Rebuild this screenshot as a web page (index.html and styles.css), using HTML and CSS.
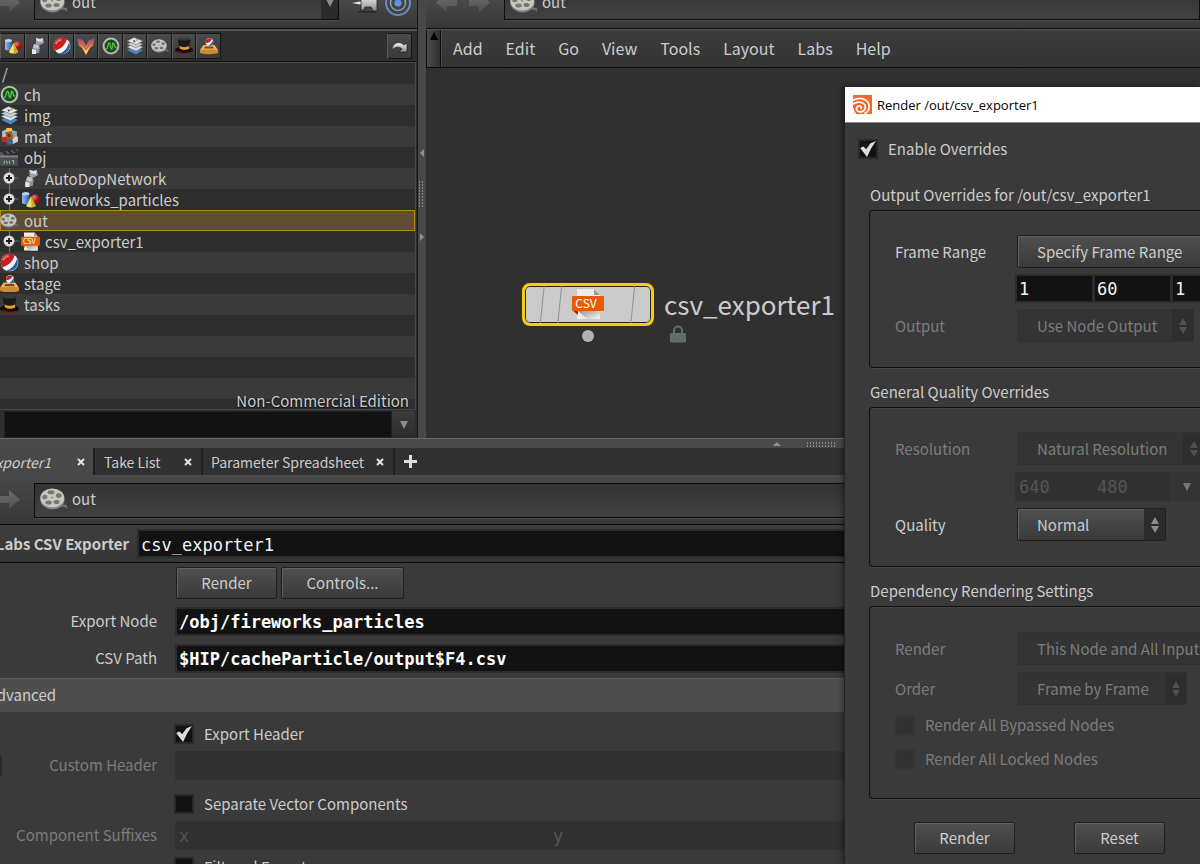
FILE: index.html
```html
<!DOCTYPE html>
<html lang="en">
<head>
<meta charset="utf-8">
<title>csv_exporter1</title>
<meta name="viewport" content="width=device-width, initial-scale=1">
<link rel="stylesheet" href="styles.css">
</head>
<body>
<svg class="sprite" aria-hidden="true">
  <defs>
    <linearGradient id="g-blue" x1="0" x2="1"><stop offset="0" stop-color="#9cc0ea"/><stop offset="1" stop-color="#2c5b9c"/></linearGradient>
    <radialGradient id="g-red" cx=".35" cy=".3"><stop offset="0" stop-color="#f08070"/><stop offset="1" stop-color="#a01010"/></radialGradient>
    <linearGradient id="g-flame" x1="0" x2="0" y1="0" y2="1"><stop offset="0" stop-color="#7a4a98"/><stop offset=".5" stop-color="#e08040"/><stop offset="1" stop-color="#f8b030"/></linearGradient>
    <linearGradient id="g-metal" x1="0" x2="0" y1="0" y2="1"><stop offset="0" stop-color="#f4f4f4"/><stop offset="1" stop-color="#8a8a8a"/></linearGradient>
    <linearGradient id="g-fold" x1="0" x2="1" y1="0" y2="1"><stop offset="0" stop-color="#8c8c8c"/><stop offset="1" stop-color="#f6f6f6"/></linearGradient>
    <linearGradient id="g-arrow" x1="0" x2="0" y1="0" y2="1"><stop offset="0" stop-color="#6e6e6e"/><stop offset="1" stop-color="#505050"/></linearGradient>
  </defs>
  <symbol id="i-shapes" viewBox="0 0 18 18">
    <path d="M1 4v8c1 2 6 2 7 0V4z" fill="url(#g-blue)"/><ellipse cx="4.500" cy="3.500" rx="3.500" ry="1.500" fill="#b8d0ee"/>
    <circle cx="13.500" cy="8.500" r="4.300" fill="url(#g-red)"/>
    <path d="M9.500 6l4.500 9c-1.500 2-8 2-9 0z" fill="#f2e070"/><path d="M9.500 6l4.500 9c-1 1-2.500 1.500-4 1.500z" fill="#c9a828"/>
  </symbol>
  <symbol id="i-dop" viewBox="0 0 18 18">
    <path d="M8 1l4 1 3-1 1 5-4 2-4-1z" fill="#98a3af"/><path d="M8 1l4 1 3-1-1 4-5-1z" fill="#d9e0e8"/>
    <path d="M6 7l5 1 1 3-1 5-6 1-1-4z" fill="#8894a1"/><path d="M6 7l5 1-1 4-5-1z" fill="#bcc7d2"/><path d="M4 12l4 1v4l-4 0z" fill="#e4e9ee"/>
  </symbol>
  <symbol id="i-shop" viewBox="0 0 18 18">
    <circle cx="9" cy="9" r="8.300" fill="#f4f4f4"/>
    <path d="M2 13.500C-1 8 2 1 9 .700c2.500 0 4 .5 5 1.300C12.500 7 9 12 2 13.500z" fill="#c81e24"/><path d="M3 7c1-3 3-4 5.500-4" stroke="#f0786c" stroke-width="1.800" fill="none"/>
    <path d="M6 16.800c5-1.500 8.500-5.500 10-11.300C19 11 14 18.500 6 16.800z" fill="#1f5fae"/>
  </symbol>
  <symbol id="i-vex" viewBox="0 0 18 18">
    <path d="M0 1l6 2 3 6 3-6 6-2-2 8-3 2-4 7-4-7-3-2z" fill="url(#g-flame)"/><path d="M4 4l5 9 5-9" stroke="#d8566a" stroke-width="1.200" fill="none"/><path d="M5 9l4 8 4-8-4 5z" fill="#ffe060"/>
  </symbol>
  <symbol id="i-ch" viewBox="0 0 18 18">
    <circle cx="9" cy="9" r="7.400" fill="#174d1a" stroke="#b4b8b4" stroke-width="2"/>
    <path d="M4 11c1.500 3 2-6 3.500-5S8 12 9.500 12 10 5 11.500 6s.5 6 3 4" fill="none" stroke="#5fb850" stroke-width="1.300"/>
  </symbol>
  <symbol id="i-img" viewBox="0 0 18 18">
    <path d="M1 13l7-3 9 3-7 4.500z" fill="#4f86c4"/><path d="M1 10l7-3 9 3-7 4z" fill="#dfe6ec" stroke="#66727c" stroke-width=".5"/>
    <path d="M1 7l7-3 9 3-7 4z" fill="#c8d0d6" stroke="#545e66" stroke-width=".5"/><path d="M1 4l7-3.500L17 4l-7 3.500z" fill="#e6e8e8" stroke="#545e66" stroke-width=".5"/>
    <path d="M7 3l3 1-2 1.500z" fill="#42423a"/><circle cx="11" cy="3" r="1" fill="#c79a40"/>
  </symbol>
  <symbol id="i-reel" viewBox="0 0 28 22">
    <path d="M19 16l8 1v4l-2-2-7-1z" fill="#70736d"/><ellipse cx="12.500" cy="12" rx="12" ry="9.500" fill="#7d8078"/>
    <ellipse cx="12.300" cy="10" rx="12" ry="9.500" fill="#c6c8c0"/>
    <g fill="#74786f"><ellipse cx="11" cy="4.300" rx="3.400" ry="2"/><ellipse cx="4.800" cy="9" rx="2.600" ry="2.300"/><ellipse cx="18.800" cy="7.600" rx="2.800" ry="2.300"/><ellipse cx="8.500" cy="14.500" rx="3.200" ry="2.100"/><ellipse cx="16.500" cy="14" rx="3" ry="2.100"/></g>
    <circle cx="12" cy="9.500" r="1" fill="#85887f"/>
  </symbol>
  <symbol id="i-hat" viewBox="0 0 18 18">
    <ellipse cx="9" cy="13" rx="9" ry="3.600" fill="#120b08"/><path d="M2 14.500c3 2.500 9 2.500 13 1" stroke="#7d1a10" stroke-width="1.200" fill="none"/>
    <path d="M2.500 2c3-1.500 10-1.500 13 0l-1.500 10c-3 1.500-6.500 1.500-9.500 0z" fill="#1c1a1a"/><ellipse cx="9" cy="2.200" rx="6.500" ry="1.400" fill="#3a3838"/>
    <path d="M4.300 9c3 1.500 6.500 1.500 10 0v2.800c-3 1.500-6.500 1.500-9.500 0z" fill="#e8a02c"/>
  </symbol>
  <symbol id="i-stage" viewBox="0 0 18 18">
    <path d="M3.500 8h11l3.500 5H0z" fill="#f0b65c"/><path d="M0 12.500h18v3.500c-4 1.500-14 1.500-18 0z" fill="#cf8a34"/><path d="M5 9.500h8l1 2H4z" fill="#7e4a16"/>
    <circle cx="9.500" cy="5" r="3.800" fill="#f0f0f0"/><path d="M5.900 6C5.200 2.500 8 .8 12 2 11 4 9 6 5.900 6z" fill="#c81e24"/><path d="M8.500 8.800c2-1 3.300-2.800 4.400-5.200C14 7 12 9.600 8.500 8.800z" fill="#1f5fae"/>
  </symbol>
  <symbol id="i-mat" viewBox="0 0 18 18">
    <path d="M2 4l5-2 3 3v5H2z" fill="#aebfd4"/><path d="M10 3l6 1v6h-6z" fill="#8aa3c2"/><path d="M6 1h5l1 3H6z" fill="#f0c93c"/>
    <path d="M1 10l5-1 1 6-5-1z" fill="#c92a20"/><path d="M11 10l6-1v5l-5 2z" fill="#d8d0c8"/><path d="M5 5l6-1 2 7-6 2z" fill="#a85e18"/><path d="M7 6l3 1v3l-3-1z" fill="#5e300c"/><path d="M6 13l6-1v4l-5 1z" fill="#2f66ac"/>
  </symbol>
  <symbol id="i-clap" viewBox="0 0 18 18">
    <path d="M0 4l17-3v3L0 7z" fill="#555"/><path d="M3 3.500l3 2.500M8 2.500l3 2.500M13 2l3 2" stroke="#222" stroke-width="1.600"/>
    <path d="M0 7h17v10H0z" fill="#484e50"/><path d="M0 7h17v2H0z" fill="#7b8080"/><path d="M4 12v3M6 12l1 3M9 12v3M11 12h2v3" stroke="#a9b0b0" fill="none"/>
  </symbol>
  <symbol id="i-csv" viewBox="0 0 32 32">
    <path d="M5 1h18l5 6v24H5z" fill="#ececec"/><path d="M22 1l6 6h-6z" fill="#999"/><path d="M5 22h23v9H15z" fill="url(#g-fold)"/><path d="M0 22h6v5z" fill="#8f3a05"/>
    <rect x="0" y="8" width="32" height="15" rx="1" fill="#e65c06"/>
    <text x="14" y="20" class="csv-mark">CSV</text>
  </symbol>
  <symbol id="i-plus" viewBox="0 0 18 21">
    <path d="M9 0v21M9 10h9" stroke="#6e6e6e" stroke-width="1.200"/><circle cx="8.500" cy="10" r="5.500" fill="#dcdcdc"/><path d="M8.500 7v6M5.500 10h6" stroke="#1c1c1c" stroke-width="1.800"/>
  </symbol>
  <symbol id="i-fwd" viewBox="0 0 22 22"><path d="M0 7h10V1l11 9.500L10 20v-6H0z" fill="url(#g-arrow)"/></symbol>
  <symbol id="i-back" viewBox="0 0 22 22"><path d="M22 7H12V1L1 10.500 12 20v-6h10z" fill="url(#g-arrow)"/></symbol>
  <symbol id="i-pin" viewBox="0 0 26 22">
    <path d="M4 19h20v2H8z" fill="#2b2b2b"/><path d="M0 11l11-2v4z" fill="#eee"/><path d="M9 4l3 0 1 3h6l2-4h4v16h-4l-2-4h-6l-1 3H9z" fill="url(#g-metal)" stroke="#242424" stroke-width=".8"/>
  </symbol>
  <symbol id="i-target" viewBox="0 0 28 28">
    <g fill="none" stroke="#6489c0"><circle cx="14" cy="14" r="12" stroke-width="2"/><circle cx="14" cy="14" r="7.500" stroke-width="1.500" stroke="#8c9db8"/></g><circle cx="14" cy="14" r="3.500" fill="#5a94e0"/>
  </symbol>
  <symbol id="i-jump" viewBox="0 0 18 18"><path d="M1 13C1 6 8 3 13 8l3-2v9H8l3-3c-3-3-7-2-10 1z" fill="url(#g-metal)" stroke="#1c1c1c" stroke-width=".7"/></symbol>
  <symbol id="i-houdini" viewBox="0 0 20 20">
    <rect width="20" height="20" fill="#f2682a"/><g fill="none" stroke="#fff" stroke-width="1.800"><path d="M0 5.500C8 1 17 5 17 12c0 4-2.500 6.500-5 7.500"/><path d="M0 9.500C6 5.500 13 8 13 13c0 4-5 6-8 4-2.500-2-1-5.500 1.500-5.500 2 0 3 2 1.500 3"/><path d="M0 14c0 3 1 5 2.500 6"/></g>
  </symbol>
  <symbol id="i-lock" viewBox="0 0 16 18"><path d="M4 9V5.500a4 4 0 0 1 8 0V9" fill="none" stroke="#5f6d6b" stroke-width="2"/><rect x="0" y="8" width="16" height="9.500" rx="1" fill="#5f6d6b"/></symbol>
  <symbol id="i-x" viewBox="0 0 8 8"><path d="M1 1l6 6M7 1L1 7" stroke="#e4e4e4" stroke-width="2"/></symbol>
  <symbol id="i-updown" viewBox="0 0 8 16"><path d="M4 0l4 7H0zM4 16l4-7H0z" fill="currentColor"/></symbol>
  <symbol id="i-down" viewBox="0 0 8 8"><path d="M0 0h8L4 8z" fill="currentColor"/></symbol>
</svg>

<main class="app">
  <div class="upper">
    <section class="tree-pane" aria-label="Tree view">
      <div class="path-bar path-bar--clipped">
        <div class="nav"><svg class="nav-arrow"><use href="#i-fwd"/></svg></div>
        <div class="path-box path-box--short"><svg class="reel"><use href="#i-reel"/></svg><span>out</span><button class="path-drop" aria-label="Path history"><svg class="tri"><use href="#i-down"/></svg></button></div>
        <svg class="pin"><use href="#i-pin"/></svg>
        <svg class="target"><use href="#i-target"/></svg>
      </div>
      <div class="toolbar">
        <div class="tools">
          <button class="tool" aria-label="Objects"><svg><use href="#i-shapes"/></svg></button>
          <button class="tool" aria-label="Dynamics"><svg><use href="#i-dop"/></svg></button>
          <button class="tool" aria-label="Shaders"><svg><use href="#i-shop"/></svg></button>
          <button class="tool" aria-label="VEX builder"><svg><use href="#i-vex"/></svg></button>
          <button class="tool" aria-label="Channels"><svg><use href="#i-ch"/></svg></button>
          <button class="tool" aria-label="Compositing"><svg><use href="#i-img"/></svg></button>
          <button class="tool" aria-label="Outputs"><svg><use href="#i-reel"/></svg></button>
          <button class="tool" aria-label="Tasks"><svg><use href="#i-hat"/></svg></button>
          <button class="tool" aria-label="Stage"><svg><use href="#i-stage"/></svg></button>
        </div>
        <button class="tool" aria-label="Jump to"><svg><use href="#i-jump"/></svg></button>
      </div>
      <div class="tree-wrap">
        <ul class="tree">
          <li class="root">/</li>
          <li><svg><use href="#i-ch"/></svg>ch</li>
          <li><svg><use href="#i-img"/></svg>img</li>
          <li><svg><use href="#i-mat"/></svg>mat</li>
          <li><svg><use href="#i-clap"/></svg>obj</li>
          <li><svg class="branch"><use href="#i-plus"/></svg><svg><use href="#i-dop"/></svg>AutoDopNetwork</li>
          <li><svg class="branch"><use href="#i-plus"/></svg><svg><use href="#i-shapes"/></svg>fireworks_particles</li>
          <li class="selected"><svg><use href="#i-reel"/></svg>out</li>
          <li><svg class="branch"><use href="#i-plus"/></svg><svg><use href="#i-csv"/></svg>csv_exporter1</li>
          <li><svg><use href="#i-shop"/></svg>shop</li>
          <li><svg><use href="#i-stage"/></svg>stage</li>
          <li><svg><use href="#i-hat"/></svg>tasks</li>
        </ul>
        <p class="edition">Non-Commercial Edition</p>
      </div>
      <div class="filter">
        <input class="filter-field" type="text" aria-label="Filter">
        <button class="filter-drop" aria-label="Filter history"><svg class="tri"><use href="#i-down"/></svg></button>
      </div>
    </section>

    <div class="splitter"><i class="mark mark--left"></i><i class="grip"></i><i class="mark mark--right"></i></div>

    <section class="network" aria-label="Network view">
      <div class="path-bar path-bar--clipped">
        <div class="nav nav--pair"><svg class="nav-arrow"><use href="#i-back"/></svg><svg class="nav-arrow"><use href="#i-fwd"/></svg></div>
        <div class="path-box"><svg class="reel"><use href="#i-reel"/></svg><span>out</span></div>
      </div>
      <nav class="menu-bar">
        <button class="collapse" aria-label="Collapse menu"><svg class="tri tri--up"><use href="#i-down"/></svg></button>
        <div class="menus"><a href="#add">Add</a><a href="#edit">Edit</a><a href="#go">Go</a><a href="#view">View</a><a href="#tools">Tools</a><a href="#layout">Layout</a><a href="#labs">Labs</a><a href="#help">Help</a></div>
      </nav>
      <div class="canvas">
        <div class="node">
          <div class="node-body">
            <svg class="node-lines" viewBox="0 0 126 38"><path d="M18 0l-4 38M36 0l-4 38M111 0l-4 38" stroke="#8c8c8c"/></svg>
            <svg class="node-icon"><use href="#i-csv"/></svg>
          </div>
          <i class="node-port"></i>
          <div class="node-side"><span class="node-name">csv_exporter1</span><svg class="lock"><use href="#i-lock"/></svg></div>
        </div>
      </div>
    </section>
  </div>

  <section class="lower" aria-label="Parameters">
    <div class="h-splitter"><i class="mark mark--up"></i><i class="grip grip--wide"></i></div>
    <div class="tabs">
      <div class="tab tab--active"><span>csv_exporter1</span><button aria-label="Close csv_exporter1"><svg><use href="#i-x"/></svg></button></div>
      <div class="tab tab--take"><span>Take List</span><button aria-label="Close Take List"><svg><use href="#i-x"/></svg></button></div>
      <div class="tab tab--sheet"><span>Parameter Spreadsheet</span><button aria-label="Close Parameter Spreadsheet"><svg><use href="#i-x"/></svg></button></div>
      <button class="tab-add" aria-label="New tab"></button>
    </div>
    <div class="path-bar">
      <div class="nav"><svg class="nav-arrow"><use href="#i-fwd"/></svg></div>
      <div class="path-box"><svg class="reel"><use href="#i-reel"/></svg><span>out</span></div>
    </div>
    <div class="name-row">
      <label for="node-name">Labs CSV Exporter</label>
      <input id="node-name" class="field" type="text" value="csv_exporter1">
    </div>
    <div class="params">
      <div class="param-actions"><button class="btn btn--render">Render</button><button class="btn btn--controls">Controls...</button></div>
      <div class="param"><label for="export-node">Export Node</label><input id="export-node" class="field field--bold" type="text" value="/obj/fireworks_particles"></div>
      <div class="param"><label for="csv-path">CSV Path</label><input id="csv-path" class="field field--bold" type="text" value="$HIP/cacheParticle/output$F4.csv"></div>
    </div>
    <h2 class="section-head"><span>Advanced</span></h2>
    <div class="advanced">
      <label class="check-row"><input class="check" type="checkbox" checked>Export Header</label>
      <div class="param param--off"><input class="check check--edge" type="checkbox" aria-label="Enable custom header"><label for="custom-header">Custom Header</label><input id="custom-header" class="field field--off" type="text" disabled></div>
      <label class="check-row check-row--next"><input class="check" type="checkbox">Separate Vector Components</label>
      <div class="param param--off"><label for="suffix-x">Component Suffixes</label><input id="suffix-x" class="field field--off field--suffix" type="text" value="x" disabled><input class="field field--off" type="text" value="y" aria-label="Second suffix" disabled></div>
      <label class="check-row"><input class="check" type="checkbox">Filtered Export</label>
    </div>
  </section>

  <section class="dialog" role="dialog" aria-labelledby="dialog-title">
    <header class="dialog-title"><svg class="logo"><use href="#i-houdini"/></svg><span id="dialog-title">Render /out/csv_exporter1</span></header>
    <div class="dialog-body">
      <label class="override"><input class="check" type="checkbox" checked>Enable Overrides</label>

      <h3>Output Overrides for /out/csv_exporter1</h3>
      <div class="group">
        <div class="row"><label for="frame-range">Frame Range</label><div class="select select--frame"><select id="frame-range"><option>Specify Frame Range</option></select></div></div>
        <div class="row row--fields"><span></span><div class="numbers"><input class="field" type="text" value="1" aria-label="Start"><input class="field" type="text" value="60" aria-label="End"><input class="field" type="text" value="1" aria-label="Step"></div></div>
        <div class="row row--off"><label for="output">Output</label><div class="select select--output"><select id="output" disabled><option>Use Node Output</option></select><span class="spin"><svg><use href="#i-updown"/></svg></span></div></div>
      </div>

      <h3>General Quality Overrides</h3>
      <div class="group group--quality">
        <div class="row row--off"><label for="resolution">Resolution</label><div class="select select--resolution"><select id="resolution" disabled><option>Natural Resolution</option></select><span class="spin"><svg><use href="#i-updown"/></svg></span></div></div>
        <div class="row row--fields row--off"><span></span><div class="numbers"><input class="field field--off" type="text" value="640" aria-label="Width" disabled><input class="field field--off" type="text" value="480" aria-label="Height" disabled><button class="res-drop" aria-label="Presets" disabled><svg class="tri"><use href="#i-down"/></svg></button></div></div>
        <div class="row"><label for="quality">Quality</label><div class="select select--quality"><select id="quality"><option>Normal</option></select><span class="spin"><svg><use href="#i-updown"/></svg></span></div></div>
      </div>

      <h3>Dependency Rendering Settings</h3>
      <div class="group group--deps">
        <div class="row row--off"><label for="render-deps">Render</label><div class="select select--deps"><select id="render-deps" disabled><option>This Node and All Inputs</option></select></div></div>
        <div class="row row--off"><label for="order">Order</label><div class="select select--order"><select id="order" disabled><option>Frame by Frame</option></select><span class="spin"><svg><use href="#i-updown"/></svg></span></div></div>
        <label class="dep-check"><input class="check" type="checkbox" disabled>Render All Bypassed Nodes</label>
        <label class="dep-check"><input class="check" type="checkbox" disabled>Render All Locked Nodes</label>
      </div>

      <footer class="dialog-actions"><button class="btn">Render</button><button class="btn btn--reset">Reset</button></footer>
    </div>
  </section>
</main>
</body>
</html>
```
FILE: styles.css
```css
:root {
  --sans: "Noto Sans CJK SC", "Open Sans", sans-serif;
  --mono: "DejaVu Sans Mono", "Liberation Mono", monospace;
  --panel: #3a3a3a;
  --dark: #2e2e2e;
  --ink: #cccccc;
  --off: #7c7c7c;
}

* { box-sizing: border-box; }

body {
  margin: 0;
  background: var(--panel);
  color: var(--ink);
  font: 15px/20px var(--sans);
  overflow: hidden;
}

button, input, select { font: inherit; color: inherit; margin: 0; }
button { border: 0; padding: 0; background: none; }
h2, h3, p, ul { margin: 0; padding: 0; font-size: 15px; font-weight: 400; list-style: none; }
svg { display: block; flex: none; }
.sprite { position: absolute; width: 0; height: 0; }
.csv-mark { font: 400 12px var(--sans); fill: #fff; text-anchor: middle; }

.app {
  position: relative;
  display: grid;
  grid-template-rows: minmax(0, 438fr) minmax(0, 426fr);
  height: 100vh;
  overflow: hidden;
}
.upper { display: grid; grid-template-columns: minmax(0, 418fr) 8px minmax(0, 774fr); min-height: 0; }

/* Path bars */
.path-bar {
  display: flex;
  align-items: center;
  flex: none;
  height: 49px;
  background: linear-gradient(#484848, #383838);
  overflow: hidden;
}
.path-bar--clipped { height: 29px; align-items: flex-end; padding-bottom: 8px; border-bottom: 1px solid #0c0c0c; }
.nav { display: flex; justify-content: flex-end; align-items: center; flex: none; width: 34px; height: 34px; padding-right: 13px; }
.nav--pair { width: 78px; gap: 12px; }
.nav-arrow { width: 22px; height: 22px; }
.path-box {
  display: flex;
  align-items: center;
  gap: 4px;
  flex: 1;
  height: 35px;
  padding: 0 0 2px 5px;
  border: 1px solid #0d0d0d;
  background: linear-gradient(#333, #424242);
  box-shadow: 0 1px #4c4c4c;
}
.path-box--short { flex: none; width: 305px; }
.reel { width: 28px; height: 22px; }
.path-drop { display: flex; align-items: center; justify-content: center; align-self: stretch; width: 17px; margin: 0 0 -2px auto; background: #2b2b2b; color: #8c8c8c; }
.tri { width: 8px; height: 8px; }
.tri--up { transform: rotate(180deg); }
.pin { width: 26px; height: 34px; margin-left: 13px; }
.target { width: 28px; height: 34px; margin-left: 6px; }

/* Tree pane */
.tree-pane { display: flex; flex-direction: column; min-height: 0; border-right: 1px solid #141414; background: var(--dark); }
.toolbar {
  display: flex;
  justify-content: space-between;
  align-items: center;
  flex: none;
  height: 33px;
  padding-right: 5px;
  border-top: 2px solid #555;
  border-bottom: 1px solid #111;
}
.tools { display: flex; }
.tool {
  display: grid;
  place-items: center;
  width: 25px;
  height: 26px;
  border: 1px solid #161616;
  border-left-color: #5a5a5a;
  background: linear-gradient(#4a4a4a, #3a3a3a);
}
.tools .tool:nth-child(even) { width: 24px; }
.tool svg { width: 18px; height: 18px; }
.tree-wrap {
  position: relative;
  flex: 1;
  min-height: 0;
  margin-right: 1px;
  border: 1px solid #484848;
  border-left: 0;
  background: repeating-linear-gradient(#2e2e2e 0 21px, #3a3a3a 21px 42px);
  overflow: hidden;
}
.tree li { display: flex; align-items: center; gap: 5px; height: 21px; }
.tree svg { width: 19px; height: 19px; }
.tree svg + svg { margin-left: -3px; }
.tree .branch { height: 21px; }
.tree .root { padding-left: 2px; }
.tree .selected { background: #5f4f30; box-shadow: inset 0 0 0 1px #b8841c; }
.edition { position: absolute; right: 6px; bottom: -2px; text-shadow: 0 1px 2px #000; }
.filter { display: flex; flex: none; height: 28px; padding: 1px 2px 0 4px; }
.filter-field { flex: 1; min-width: 0; border: 1px solid #222; background: #121212; }
.filter-drop { display: grid; place-items: center; width: 23px; background: linear-gradient(#3c3c3c, #2c2c2c); color: #8c8c8c; }

/* Splitters */
.splitter { display: flex; flex-direction: column; align-items: center; background: #484848; }
.mark { border: 4px solid transparent; }
.mark--left { border-right-color: #909090; margin: 149px 4px 23px 0; }
.mark--right { border-left-color: #909090; margin: 25px 0 0 4px; }
.mark--up { border-bottom-color: #909090; margin-top: -4px; }
.grip { width: 6px; height: 28px; background: repeating-linear-gradient(#484848 0 1px, transparent 1px 3px), repeating-linear-gradient(90deg, #8a8a8a 0 1px, #484848 1px 3px); }
.h-splitter { display: flex; align-items: center; justify-content: center; gap: 26px; flex: none; height: 10px; padding-left: 408px; border-top: 1px solid #6a6a6a; background: #4a4a4a; }
.grip--wide { width: 28px; height: 6px; }

/* Network pane */
.network { display: flex; flex-direction: column; min-width: 0; background: #303030; }
.menu-bar { display: flex; flex: none; height: 39px; border-top: 1px solid #565656; border-bottom: 1px solid #0c0c0c; background: linear-gradient(#3c3c3c, #343434); }
.collapse { display: flex; justify-content: center; width: 15px; padding-top: 2px; border: 1px solid #0c0c0c; border-width: 0 1px; background: linear-gradient(90deg, #4a4a4a, #303030); color: #000; }
.menus { display: flex; align-items: center; gap: 23px; padding: 0 0 1px 11px; font-size: 16px; border-left: 1px solid #505050; }
.menus a { color: inherit; text-decoration: none; }
.canvas { position: relative; flex: 1; min-height: 0; overflow: hidden; }
.node { position: absolute; left: 96px; top: 215px; display: grid; grid-template-columns: 132px auto; column-gap: 10px; }
.node-body { position: relative; height: 43px; border: 3px solid #f2cf0a; border-radius: 8px; background: #cbcbcb; box-shadow: inset 0 0 0 1px #222; }
.node-lines { width: 126px; height: 37px; }
.node-icon { position: absolute; left: 47px; top: 2px; width: 32px; height: 32px; }
.node-port { grid-row: 2; justify-self: center; width: 12px; height: 12px; margin-top: 2px; border-radius: 50%; background: #b2b2b2; }
.node-side { grid-column: 2; grid-row: 1 / 3; }
.node-name { display: block; font-size: 26px; line-height: 42px; }
.lock { width: 16px; height: 18px; margin: 0 0 0 6px; }

/* Parameter pane */
.lower { display: flex; flex-direction: column; min-height: 0; overflow: hidden; }
.tabs { display: flex; flex: none; height: 27px; background: #303030; }
.tab { display: flex; align-items: center; justify-content: space-between; flex: none; padding: 0 9px; border-left: 2px solid #202020; font-size: 14px; white-space: nowrap; }
.tab button, .tab button svg { width: 8px; height: 8px; }
.tab--active { justify-content: flex-end; gap: 26px; width: 93px; padding: 0 8px; border-left: 0; background: #484848; font-style: italic; overflow: hidden; }
.tab--take { width: 108px; }
.tab--sheet { width: 192px; padding: 0 9px 0 8px; }
.tab-add { flex: none; width: 32px; border-left: 2px solid #202020; background: linear-gradient(#ddd, #ddd) center / 13px 3px no-repeat, linear-gradient(#ddd, #ddd) center / 3px 13px no-repeat; }
.lower .path-bar { border-top: 1px solid #4a4a4a; }
.name-row { display: flex; align-items: center; flex: none; height: 39px; border: 1px solid #0a0a0a; border-width: 1px 0; background: linear-gradient(#3e3e3e, #363636); font-weight: 700; }
.name-row label { display: flex; justify-content: flex-end; flex: none; width: 137px; padding-right: 8px; white-space: nowrap; }
.field { flex: 1; min-width: 0; height: 29px; padding: 0 2px; border: 2px solid #2c2c2c; background: #121212; color: #f2f2f2; font: 400 17px/20px var(--mono); }
.name-row .field { padding-top: 2px; }
.field--bold { font-weight: 700; color: #fff; }
.field--off { border-color: #323232; background: #313131; color: #555; }
.field:disabled { opacity: 1; }
.params { display: grid; gap: 8px; flex: none; padding: 4px 0 5px; }
.param-actions { display: flex; gap: 4px; padding-left: 176px; }
.btn { height: 32px; width: 101px; padding-bottom: 1px; border: 1px solid #1e1e1e; border-radius: 2px; background: linear-gradient(#505050, #3a3a3a); box-shadow: inset 1px 1px #606060; }
.btn--controls { width: 123px; }
.btn--reset { width: 91px; }
.param { position: relative; display: flex; align-items: center; }
.param label { flex: none; width: 175px; padding: 0 18px 2px 0; text-align: right; }
.param--off label { color: var(--off); }
.section-head { display: flex; align-items: center; flex: none; height: 34px; padding-bottom: 2px; border-top: 1px solid #5a5a5a; background: #4e4e4e; }
.section-head span { display: flex; justify-content: flex-end; width: 56px; }
.advanced { display: flex; flex-direction: column; gap: 7px; flex: none; padding-top: 12px; }
.check-row { display: flex; align-items: center; gap: 10px; height: 20px; padding-left: 174px; }
.check-row--next { margin: 7px 0 0; }
.check { appearance: none; flex: none; width: 20px; height: 20px; border: 2px solid #292929; background: #121212; }
.check:checked::before { content: ""; display: block; width: 16px; height: 16px; background: #dcdcdc; clip-path: polygon(2% 46%, 14% 36%, 24% 36%, 38% 52%, 66% 14%, 100% 0, 70% 46%, 44% 100%); }
.check:disabled { border-color: #353535; background: #323232; }
.check--edge { position: absolute; left: -18px; }
.field--suffix { flex: none; width: 374px; }

/* Dialog */
.dialog { position: absolute; top: 87px; right: 0; bottom: 0; width: 356px; border-left: 1px solid #242424; background: var(--panel); box-shadow: -1px 0 6px rgba(0, 0, 0, .5); overflow: hidden; }
.dialog-title { display: flex; align-items: center; gap: 5px; height: 36px; padding-left: 8px; border-bottom: 1px solid #888; background: #fff; color: #000; font: 13px/20px "Open Sans", sans-serif; }
.logo { width: 19px; height: 19px; }
.dialog-body { padding: 16px 0 0 24px; }
.override { display: flex; align-items: center; gap: 10px; height: 20px; margin-left: -11px; }
.dialog h3 { margin-top: 26px; padding: 0 0 5px 1px; line-height: 20px; }
.dialog .group + h3 { margin-top: 14px; }
.group { display: flex; flex-direction: column; gap: 6px; height: 158px; padding: 24px 0 0 25px; border: 1px solid #111; border-right: 0; border-radius: 4px 0 0 4px; box-shadow: inset 0 1px #444, 0 1px #484848; }
.group--quality { gap: 8px; height: 160px; }
.group--deps { height: 193px; padding-top: 25px; gap: 8px; }
.row { display: flex; align-items: center; height: 33px; }
.row > :first-child { flex: none; width: 122px; }
.row--fields { height: 29px; }
.row--off { color: var(--off); }
.numbers { display: flex; flex: none; margin-left: -2px; }
.numbers .field { flex: none; width: 79px; }
.numbers .field + .field { margin-left: -1px; }
.select { display: flex; flex: none; height: 33px; border: 1px solid #1e1e1e; border-radius: 2px; background: linear-gradient(#505050, #3a3a3a); box-shadow: inset 1px 1px #606060; overflow: hidden; }
.select select { flex: 1; min-width: 0; appearance: none; padding: 0 0 0 19px; border: 0; background: none; opacity: 1; }
.row--off .select { border-color: #323232; background: #343434; box-shadow: none; }
.spin { display: grid; place-items: center; flex: none; width: 21px; background: #2c2c2c; color: #8c8c8c; }
.spin svg { width: 8px; height: 16px; }
.row--off .spin { background: #2e2e2e; color: #505050; }
.select--frame { width: 200px; }
.select--output { width: 177px; }
.select--resolution { width: 188px; }
.select--quality { width: 149px; }
.select--deps { width: 240px; }
.select--order { width: 170px; }
.group--quality, .group--deps { gap: 7px; }
.res-drop { display: grid; place-items: center; width: 28px; margin-left: 1px; background: #343434; color: #777; }
.dep-check { display: flex; align-items: center; gap: 10px; height: 20px; margin-top: 3px; color: var(--off); }
.dep-check + .dep-check { margin-top: 7px; }
.dialog-actions { display: flex; gap: 59px; padding: 23px 0 0 45px; }
```
